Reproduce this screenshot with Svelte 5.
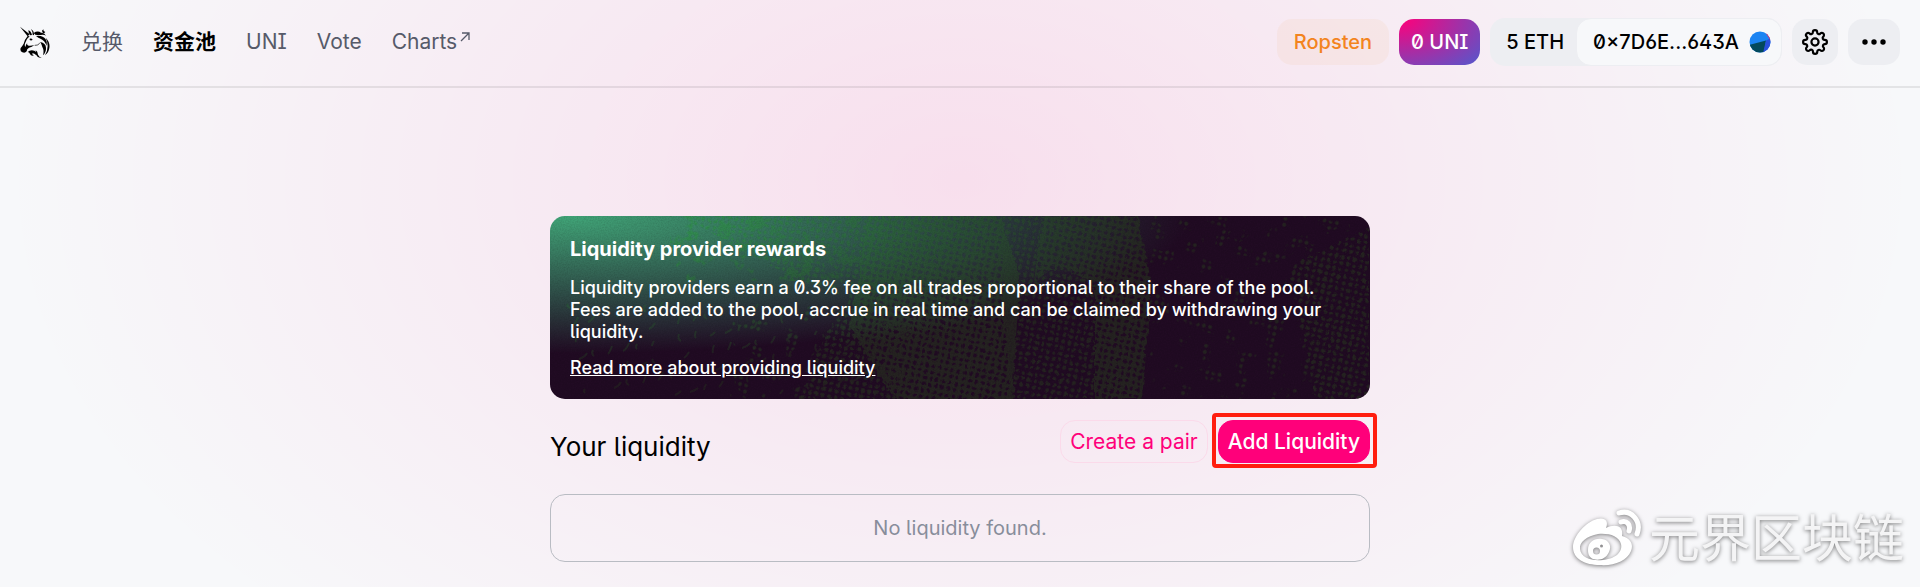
<script>
  const links = [
    { label: "兑换", href: "#/swap" },
    { label: "资金池", href: "#/pool", active: true },
    { label: "UNI", href: "#/uni" },
    { label: "Vote", href: "#/vote" },
    { label: "Charts", href: "#/charts", external: true }
  ];

  const network = "Ropsten";
  const balance = "5 ETH";
  const account = "0×7D6E...643A";

  // short curved strokes in the lower left of the rewards card
  const strokes = createStrokes(80);

  function createStrokes(count) {
    return new Array(count).fill(null).map((_, i) => {
      const x = 20 + ((i * 67) % 300);
      const y = 92 + ((i * 41) % 88);
      const dx = ((i * 13) % 11) - 4;
      return `M${x} ${y}q${dx} -2 ${dx + 2} -${4 + (i % 5)}`;
    });
  }
</script>

<div class="page">
  <header>
    <a class="logo" href="#/" aria-label="Uniswap">
      <svg viewBox="0 0 90 96" width="30" height="32">
        <path d="M0 2L29 25L23 31Z" />
        <path d="M25 13Q33 15 36 27L31 28Q25 22 25 13ZM33 9Q43 15 42 28L38 26Q38 16 33 9Z" />
        <path
          d="M23 30Q13 42 11 53Q7 60 2 66Q-1 75 7 79Q15 83 20 76Q20 69 27 65Q36 63 43 57Q34 60 26 59Q19 58 22 50Q17 57 16 63Q12 57 17 48Q22 36 29 31Z" />
        <path d="M29 38Q35 36 38 41Q34 45 29 42Z" />
        <path d="M41 21Q53 13 63 20Q73 19 78 29Q71 24 62 27Q54 28 46 26Z" />
        <path d="M66 14L70 10L71 15L76 18L72 22L68 20Z" />
        <path d="M48 30Q68 27 77 40Q83 49 80 59Q73 43 63 39Q55 36 48 30Z" />
        <path d="M77 35Q91 49 88 66Q86 80 75 88Q83 74 83 60Q83 47 77 35Z" />
        <path d="M61 48Q77 51 78 65Q79 78 69 88Q73 72 67 63Q65 56 61 48Z" />
        <path
          d="M23 78Q31 70 43 74Q51 78 49 88Q41 80 37 82Q35 87 42 88Q33 91 30 84Q28 78 23 78ZM47 73Q53 76 54 86Q57 93 65 95Q50 96 49 85Z" />
        <path class="line" d="M44 58Q55 60 60 50" />
      </svg>
    </a>

    <nav>
      {#each links as link}
        <a href={link.href} class:active={link.active}>
          {link.label}{#if link.external}<svg
              class="arrow"
              viewBox="0 0 10 10"
              width="10"
              height="10"
              aria-hidden="true">
              <path d="M1 9L9 1M2 1H9V8" />
            </svg>{/if}
        </a>
      {/each}
    </nav>

    <div class="controls">
      <div class="network">{network}</div>
      <button class="uni">0 UNI</button>
      <div class="wallet">
        <span class="balance">{balance}</span>
        <button class="account">
          {account}
          <svg viewBox="0 0 22 22" width="22" height="22" aria-hidden="true">
            <defs>
              <clipPath id="avatar"><circle cx="11" cy="11" r="10.5" /></clipPath>
            </defs>
            <g clip-path="url(#avatar)">
              <path fill="#1c84f2" d="M0 0H22V22H0Z" />
              <path fill="#03495c" d="M0 14L17 9.500L15 22H0Z" />
              <path fill="#2a50dd" d="M22 7L17 9.500L14 22H22Z" />
              <path fill="#f5205b" d="M16 1L22 10V0Z" />
            </g>
          </svg>
        </button>
      </div>
      <button class="icon" aria-label="Settings">
        <svg class="gear" viewBox="0 0 24 24" width="26" height="26">
          <circle cx="12" cy="12" r="3.300" />
          <path
            d="M19.400 15a1.650 1.650 0 0 0 .33 1.820l.06.06a2 2 0 1 1-2.830 2.830l-.06-.06a1.650 1.650 0 0 0-2.800 1.170V21a2 2 0 0 1-4 0v-.09a1.650 1.650 0 0 0-2.900-1.260l-.06.06a2 2 0 1 1-2.830-2.830l.06-.06A1.650 1.650 0 0 0 3.090 14H3a2 2 0 0 1 0-4h.09a1.650 1.650 0 0 0 1.260-2.900l-.06-.06a2 2 0 1 1 2.830-2.830l.06.06A1.650 1.650 0 0 0 10 3.090V3a2 2 0 0 1 4 0v.09a1.650 1.650 0 0 0 2.820 1.180l.06-.06a2 2 0 1 1 2.830 2.830l-.06.06A1.650 1.650 0 0 0 20.910 10H21a2 2 0 0 1 0 4h-.09a1.650 1.650 0 0 0-1.510 1z" />
        </svg>
      </button>
      <button class="icon more" aria-label="More">
        <svg viewBox="0 0 24 6" width="24" height="6">
          <circle cx="3" cy="3" r="2.700" />
          <circle cx="12" cy="3" r="2.700" />
          <circle cx="21" cy="3" r="2.700" />
        </svg>
      </button>
    </div>
  </header>

  <main>
    <section class="rewards">
      <svg class="texture" viewBox="0 0 820 183" preserveAspectRatio="none" aria-hidden="true">
        <defs>
          <pattern
            id="mesh"
            width="6.400"
            height="6.400"
            patternUnits="userSpaceOnUse"
            patternTransform="rotate(12)">
            <path
              fill="#fff"
              fill-rule="evenodd"
              d="M0 0H6.400V6.400H0ZM3.200 1.200a2 2 0 1 0 .01 0Z" />
          </pattern>
          <pattern
            id="dots"
            width="6.400"
            height="6.400"
            patternUnits="userSpaceOnUse"
            patternTransform="rotate(12)">
            <circle fill="#fff" cx="3.200" cy="3.200" r="2" />
          </pattern>
          <filter id="rough" x="0" y="0" width="100%" height="100%">
            <feTurbulence type="fractalNoise" baseFrequency="0.15" numOctaves="2" seed="4" />
            <feDisplacementMap
              in="SourceGraphic"
              scale="5"
              xChannelSelector="R"
              yChannelSelector="G" />
          </filter>
          <filter id="scatter" x="0" y="0" width="100%" height="100%">
            <feTurbulence type="fractalNoise" baseFrequency="0.06" numOctaves="3" seed="9" />
            <feColorMatrix values="0 0 0 0 0  0 0 0 0 0  0 0 0 0 0  9 0 0 0 -5" result="blot" />
            <feComposite in="SourceGraphic" in2="blot" operator="in" />
          </filter>
          <filter id="grain" x="0" y="0" width="100%" height="100%">
            <feTurbulence type="fractalNoise" baseFrequency="0.7" numOctaves="2" />
            <feColorMatrix values="0 0 0 0 0  0 0 0 0 0  0 0 0 0 0  1 0 0 0 -0.350" />
          </filter>
          <radialGradient
            id="ink"
            gradientUnits="userSpaceOnUse"
            gradientTransform="scale(620 150)"
            cx="0"
            cy="0"
            r="1">
            <stop offset="0" stop-color="#36a45a" />
            <stop offset="0.300" stop-color="#30884a" />
            <stop offset="0.600" stop-color="#2b5c38" />
            <stop offset="1" stop-color="#262821" />
          </radialGradient>
          <mask id="print" maskUnits="userSpaceOnUse" x="0" y="0" width="820" height="183">
            <g filter="url(#rough)">
              <path fill="url(#mesh)" d="M318 0H450L470 60L462 183H345L300 110Z" />
              <path
                fill="url(#mesh)"
                d="M492 0H588L602 70L592 183H545V75Q530 52 500 54L484 66Z" />
              <path fill="url(#dots)" d="M450 0H492L484 66L500 54Q530 52 545 75V183H460Z" />
              <path fill="url(#dots)" d="M250 0H318L305 110L345 183H250L275 120L300 80Z" />
              <path fill="url(#dots)" d="M130 0H250L290 80L240 60Z" />
              <path fill="url(#dots)" d="M740 50L819 12V183H765Z" />
            </g>
            <path filter="url(#scatter)" fill="url(#mesh)" d="M120 0H320V65H120Z" />
            <path filter="url(#scatter)" fill="url(#dots)" d="M600 0H800V183H600Z" />
            <path filter="url(#scatter)" fill="url(#dots)" d="M180 90H360V183H180Z" />
            {#each strokes as d}
              <path class="stroke" {d} />
            {/each}
          </mask>
        </defs>
        <path fill="url(#ink)" opacity="0.850" mask="url(#print)" d="M0 0H820V183H0Z" />
        <path class="grain" filter="url(#grain)" d="M0 0H820V183H0Z" />
      </svg>
      <div class="copy">
        <h2>Liquidity provider rewards</h2>
        <p>
          Liquidity providers earn a 0.3% fee on all trades proportional to their share of the pool.
          Fees are added to the pool, accrue in real time and can be claimed by withdrawing your
          liquidity.
        </p>
        <a href="#/docs/pools">Read more about providing liquidity</a>
      </div>
    </section>

    <div class="titleRow">
      <h1>Your liquidity</h1>
      <div class="actions">
        <button class="create">Create a pair</button>
        <div class="marked">
          <button class="add">Add Liquidity</button>
        </div>
      </div>
    </div>

    <div class="empty">No liquidity found.</div>
  </main>

  <div class="watermark">
    <svg viewBox="0 0 72 62" width="72" height="62" aria-hidden="true">
      <path
        fill-rule="evenodd"
        d="M2 39C2 28 15 14 26 11C34 9 38 13 35 20C43 16 53 17 51 28C59 30 63 36 60 43C56 53 43 58 29 57C14 57 2 51 2 39ZM9 41C10 50 20 53 32 52C44 51 52 44 50 36C48 28 38 25 27 26C16 28 8 34 9 41Z" />
      <path
        fill-rule="evenodd"
        d="M17 42C17 34 23 30 31 31C38 32 41 38 38 44C35 51 28 53 22 51C18 49 17 46 17 42ZM22 43A3.500 3.500 0 1 0 29 43A3.500 3.500 0 1 0 22 43ZM29 38A1.500 1.500 0 1 0 32 38A1.500 1.500 0 1 0 29 38Z" />
      <path class="wave" d="M48 5C60 1 71 13 66 26M50 14C56 12 60 17 58 23" />
    </svg>
    <span>元界区块链</span>
  </div>
</div>

<style>
  :global(body) {
    margin: 0;
    background-color: #f7f8fa;
  }
  .page {
    min-height: 100vh;
    box-sizing: border-box;
    color: #000;
    font-family: Inter, "Noto Sans CJK SC", sans-serif;
    font-size: 20px;
    line-height: 24px;
    font-feature-settings: "ss01" on, "ss02" on, "cv01" on, "cv03" on, "cv08" on;
    background-image: radial-gradient(
      50% 620px at 50% 180px,
      rgba(255, 0, 122, 0.1) 0%,
      rgba(255, 0, 122, 0) 100%
    );
  }
  a {
    color: inherit;
    text-decoration: none;
  }
  button {
    border: none;
    margin: 0;
    padding: 0;
    background: none;
    color: inherit;
    font: inherit;
    font-feature-settings: inherit;
    cursor: pointer;
  }
  header {
    display: flex;
    align-items: center;
    padding: 18px 20px 20px;
    border-bottom: 2px solid rgba(0, 0, 0, 0.08);
  }
  .logo {
    display: flex;
    margin-right: 31px;
  }
  .logo .line {
    fill: none;
    stroke: #000;
    stroke-width: 2;
  }
  nav {
    display: flex;
    gap: 30px;
    color: #565a69;
    font-size: 21px;
  }
  nav .active {
    color: #000;
    font-weight: 700;
  }
  .arrow {
    margin-left: 3px;
    vertical-align: 7px;
    fill: none;
    stroke: #565a69;
    stroke-width: 1.300;
  }
  .controls {
    display: flex;
    align-items: center;
    gap: 10px;
    margin-left: auto;
    font-weight: 500;
  }
  .network,
  .uni,
  .account,
  .icon {
    height: 46px;
    box-sizing: border-box;
    border-radius: 15px;
    display: flex;
    align-items: center;
    justify-content: center;
  }
  .network {
    padding: 0 17px;
    color: #f3841e;
    background-color: rgba(243, 132, 30, 0.06);
  }
  .uni {
    padding: 0 12px;
    color: #fff;
    background-image: radial-gradient(
      174% 188% at 2% 0%,
      #ff007a 0%,
      #2172e5 100%
    );
  }
  .wallet {
    display: flex;
    align-items: center;
    border-radius: 15px;
    background-color: #edeef2;
  }
  .balance {
    padding: 0 12px 0 16px;
  }
  .account {
    height: 48px;
    gap: 10px;
    padding: 0 10px 0 16px;
    border: 1px solid #edeef2;
    background-color: #f7f8fa;
  }
  .icon {
    width: 46px;
    background-color: #edeef2;
  }
  .more {
    width: 52px;
  }
  .gear {
    fill: none;
    stroke: #000;
    stroke-width: 2;
  }
  main {
    max-width: 820px;
    margin: 0 auto;
    padding: 128px 0 24px;
  }
  .rewards {
    position: relative;
    overflow: hidden;
    border-radius: 15px;
    color: #fff;
    background-color: #210b23;
    background-image: radial-gradient(
      76% 75% at 2% 0%,
      #41a578 0%,
      #210b23 100%
    );
  }
  .texture {
    position: absolute;
    inset: 0;
    width: 100%;
    height: 100%;
  }
  .stroke {
    fill: none;
    stroke: #fff;
    stroke-opacity: 0.700;
    stroke-width: 2;
  }
  .grain {
    opacity: 0.2;
  }
  .copy {
    position: relative;
    padding: 21px 20px 20px;
    font-size: 18px;
    line-height: 22px;
    font-weight: 500;
  }
  h2 {
    margin: 0 0 16px;
    font-size: 20px;
    line-height: 24px;
    font-weight: 700;
  }
  p {
    margin: 0 0 14px;
  }
  .copy a {
    text-decoration: underline;
  }
  .titleRow {
    display: flex;
    align-items: flex-end;
    justify-content: space-between;
    margin: 21px 0 31px;
  }
  h1 {
    margin: 0;
    font-size: 26px;
    line-height: 32px;
    font-weight: 400;
  }
  .actions {
    display: flex;
    gap: 10px;
    font-size: 21px;
    font-weight: 500;
  }
  .create,
  .add {
    display: block;
    height: 43px;
    padding: 0 9px;
    border: 1px solid #fbdaea;
    border-radius: 15px;
  }
  .create {
    color: #ff007a;
    font-weight: 400;
  }
  .add {
    border-color: #ff007a;
    color: #fff;
    background-color: #ff007a;
  }
  .marked {
    position: relative;
  }
  .marked::after {
    content: "";
    position: absolute;
    inset: -7px -7px -5px -6px;
    border: 4px solid #ff1e0f;
    border-radius: 4px;
    pointer-events: none;
  }
  .empty {
    padding: 21px;
    border: 1px solid #b9bcc3;
    border-radius: 15px;
    color: #888d9b;
    text-align: center;
  }
  .watermark {
    position: absolute;
    right: 16px;
    bottom: 16px;
    display: flex;
    align-items: center;
    gap: 6px;
    color: #f4f4f5;
    font-size: 51px;
    line-height: 64px;
    filter: drop-shadow(0 1px 2px rgba(0, 0, 0, 0.5));
    pointer-events: none;
  }
  .watermark svg {
    fill: #fff;
  }
  .wave {
    fill: none;
    stroke: #fff;
    stroke-width: 5;
    stroke-linecap: round;
  }
</style>
